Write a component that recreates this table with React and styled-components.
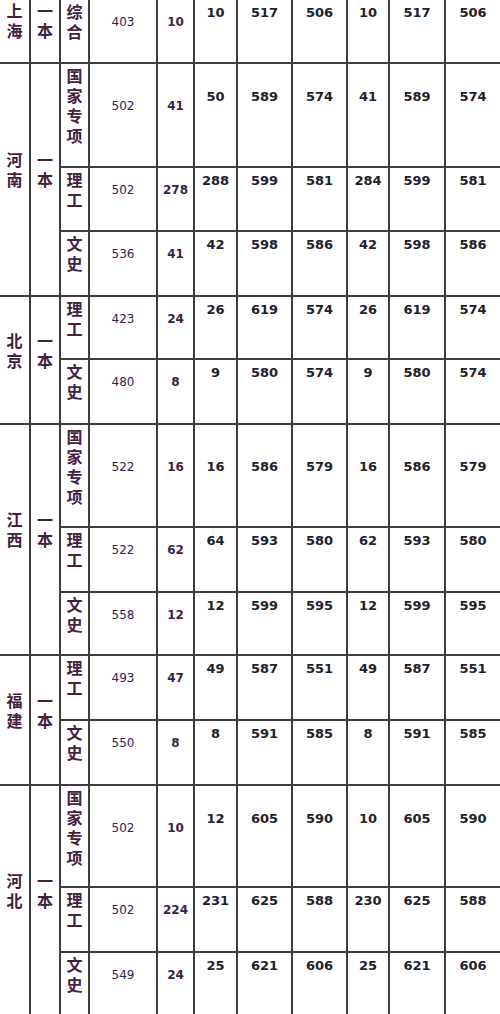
import React from "react";
import styled, { createGlobalStyle } from "styled-components";

const GlobalStyle = createGlobalStyle`
  html, body {
    margin: 0;
    padding: 0;
    background: #ffffff;
  }
  body {
    font-family: "DejaVu Sans", "Noto Sans CJK SC", sans-serif;
  }
`;

const rowHeights = [62, 102, 62, 63, 61, 63, 101, 63, 61, 63, 63, 100, 63, 62];

const groups = [
  {
    prov: "上海",
    rows: [{ sub: "综合", a: "403", b: "10", v: ["10", "517", "506", "10", "517", "506"] }],
  },
  {
    prov: "河南",
    rows: [
      { sub: "国家专项", a: "502", b: "41", v: ["50", "589", "574", "41", "589", "574"] },
      { sub: "理工", a: "502", b: "278", v: ["288", "599", "581", "284", "599", "581"] },
      { sub: "文史", a: "536", b: "41", v: ["42", "598", "586", "42", "598", "586"] },
    ],
  },
  {
    prov: "北京",
    rows: [
      { sub: "理工", a: "423", b: "24", v: ["26", "619", "574", "26", "619", "574"] },
      { sub: "文史", a: "480", b: "8", v: ["9", "580", "574", "9", "580", "574"] },
    ],
  },
  {
    prov: "江西",
    rows: [
      { sub: "国家专项", a: "522", b: "16", v: ["16", "586", "579", "16", "586", "579"], even: true },
      { sub: "理工", a: "522", b: "62", v: ["64", "593", "580", "62", "593", "580"] },
      { sub: "文史", a: "558", b: "12", v: ["12", "599", "595", "12", "599", "595"] },
    ],
  },
  {
    prov: "福建",
    rows: [
      { sub: "理工", a: "493", b: "47", v: ["49", "587", "551", "49", "587", "551"] },
      { sub: "文史", a: "550", b: "8", v: ["8", "591", "585", "8", "591", "585"] },
    ],
  },
  {
    prov: "河北",
    rows: [
      { sub: "国家专项", a: "502", b: "10", v: ["12", "605", "590", "10", "605", "590"] },
      { sub: "理工", a: "502", b: "224", v: ["231", "625", "588", "230", "625", "588"] },
      { sub: "文史", a: "549", b: "24", v: ["25", "621", "606", "25", "621", "606"] },
    ],
  },
];

const Grid = styled.div`
  display: grid;
  width: 500px;
  grid-template-columns: 29px 28px 27px 66px 35px 41px 53px 53px 40px 54px 54px;
  grid-template-rows: ${rowHeights.map((h) => h + "px").join(" ")};
  gap: 2px;
  background: #3d3d3d;
`;

const Cell = styled.div`
  background: #ffffff;
  min-width: 0;
`;

// province and batch columns, spanning every row of a province
const StackCell = styled(Cell)`
  grid-row: span ${(p) => p.span};
  display: flex;
  flex-direction: column;
  justify-content: center;
  align-items: center;
  padding: ${(p) => (p.span > 1 ? "4px 0 19px" : "2px 0 18px")};
`;

const SubCell = styled(Cell)`
  display: flex;
  flex-direction: column;
  align-items: center;
  padding-top: 4px;
`;

// characters stacked top to bottom, one per 20px
const Han = styled.span`
  display: block;
  flex-shrink: 0;
  white-space: nowrap;
  writing-mode: vertical-rl;
  text-orientation: upright;
  font-family: "Noto Sans CJK SC", "Noto Sans CJK JP", sans-serif;
  font-size: 16px;
  font-weight: 700;
  line-height: 20px;
  letter-spacing: 4px;
  color: #43213f;
`;

const NumBox = styled.div`
  display: flex;
  justify-content: center;
  align-items: center;
  height: ${(p) => p.lines * 20}px;
  margin-top: ${(p) => p.top}px;
`;

const Score = styled.span`
  font-family: "DejaVu Sans", "Liberation Sans", sans-serif;
  font-size: ${(p) => (p.kind === "score" ? 13 : 12)}px;
  font-weight: ${(p) => (p.kind === "plain" ? 400 : 700)};
  line-height: 16px;
  color: ${(p) =>
    p.kind === "plain" ? "#35224f" : p.kind === "count" ? "#3a1e4a" : "#22222a"};
`;

function Num({ value, kind, lines, top }) {
  return (
    <Cell>
      <NumBox lines={lines} top={top}>
        <Score kind={kind}>{value}</Score>
      </NumBox>
    </Cell>
  );
}

export default function App() {
  const cells = [];
  groups.forEach((g, gi) => {
    g.rows.forEach((r, ri) => {
      const lines = r.sub.length;
      if (ri === 0) {
        cells.push(
          <StackCell key={`p${gi}`} span={g.rows.length}>
            <Han>{g.prov}</Han>
          </StackCell>
        );
        cells.push(
          <StackCell key={`l${gi}`} span={g.rows.length}>
            <Han>一本</Han>
          </StackCell>
        );
      }
      const k = `${gi}-${ri}`;
      cells.push(
        <SubCell key={`s${k}`}>
          <Han>{r.sub}</Han>
        </SubCell>
      );
      cells.push(<Num key={`a${k}`} value={r.a} kind="plain" lines={lines} top={2} />);
      cells.push(<Num key={`b${k}`} value={r.b} kind="count" lines={lines} top={2} />);
      r.v.forEach((v, vi) => {
        cells.push(
          <Num
            key={`v${k}-${vi}`}
            value={v}
            kind="score"
            lines={lines}
            top={r.even ? 2 : -7}
          />
        );
      });
    });
  });

  return (
    <>
      <GlobalStyle />
      <Grid>{cells}</Grid>
    </>
  );
}
